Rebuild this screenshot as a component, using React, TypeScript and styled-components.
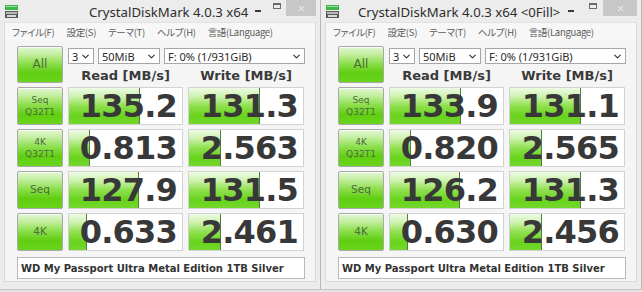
import React from 'react';
import styled, { createGlobalStyle } from 'styled-components';
import { ChevronDown, X } from 'lucide-react';

const GlobalStyle = createGlobalStyle`
  html, body {
    margin: 0;
    padding: 0;
    background: #e4e4e4;
  }
  body {
    width: 642px;
    height: 292px;
    overflow: hidden;
    font-family: "DejaVu Sans", sans-serif;
  }
`;

const Desktop = styled.div`
  display: flex;
  width: 642px;
  height: 292px;
`;

const Window = styled.div`
  width: 321px;
  height: 290px;
  box-sizing: border-box;
  background: #ececec;
  border-right: 1px solid #b8b8b8;
  border-bottom: 1px solid #c6c6c6;
  display: flex;
  flex-direction: column;
`;

const TitleBar = styled.div`
  height: 22px;
  display: flex;
  align-items: flex-start;
  padding-right: 4px;
  flex-shrink: 0;
`;

const AppIcon = styled.svg`
  margin: 5px 0 0 5px;
  flex-shrink: 0;
`;

const TitleText = styled.div<{ $offset: number }>`
  margin-left: ${p => p.$offset}px;
  margin-top: 4px;
  font: 13.2px "Noto Sans", sans-serif;
  color: #2e2e2e;
  white-space: nowrap;
  line-height: 16px;
`;

const Spacer = styled.div`
  flex: 1;
`;

const CaptionButton = styled.div<{ $w: number }>`
  width: ${p => p.$w}px;
  height: 16px;
  display: flex;
  align-items: center;
  justify-content: center;
`;

const CloseButton = styled(CaptionButton)`
  background: #c7c7c7;
`;

const MinGlyph = styled.div`
  width: 6px;
  height: 2px;
  background: #3a3a3a;
  margin-top: 6px;
`;

const MaxGlyph = styled.div`
  width: 8px;
  height: 6px;
  box-sizing: border-box;
  border: 1px solid #6a6a6a;
  border-top-width: 2px;
  margin-top: -4px;
`;

const Client = styled.div`
  flex: 1;
  margin: 0 4px 7px 4px;
  background: #f5f5f5;
  border: 1px solid #d9d9d9;
  border-top: none;
  display: flex;
  flex-direction: column;
`;

const MenuBar = styled.div`
  height: 19px;
  display: flex;
  align-items: center;
  gap: 12px;
  padding-left: 7px;
  background: #f7f7f7;
  border-top: 1px solid #e2e2e2;
  box-sizing: border-box;
`;

const MenuItem = styled.span`
  font: 9.5px "Noto Sans CJK JP", "Noto Sans", sans-serif;
  font-feature-settings: "palt" 1;
  letter-spacing: -0.3px;
  color: #5a5a5a;
  white-space: nowrap;
`;

const Body = styled.div`
  display: flex;
  flex-direction: column;
  padding: 5px 0 0 12px;
`;

const TopSection = styled.div`
  display: flex;
  gap: 5px;
  height: 37px;
`;

const GreenButton = styled.div<{ $size: number }>`
  width: 46px;
  box-sizing: border-box;
  border: 1px solid #a9a9a9;
  border-radius: 2px;
  background: linear-gradient(
    to bottom,
    #e4f7d6 0%,
    #c1ee9c 22%,
    #8ade4a 48%,
    #5fce10 74%,
    #6ad41e 100%
  );
  box-shadow: inset 0 1px 0 rgba(255, 255, 255, 0.7);
  display: flex;
  flex-direction: column;
  align-items: center;
  justify-content: center;
  font: ${p => p.$size}px "DejaVu Sans", sans-serif;
  line-height: ${p => p.$size + 3}px;
  color: #4d6b3c;
  text-align: center;
`;

const TopRight = styled.div`
  display: flex;
  flex-direction: column;
  width: 237px;
`;

const ComboRow = styled.div`
  display: flex;
  gap: 4px;
  margin-top: 2px;
`;

const Combo = styled.div<{ $w: number }>`
  width: ${p => p.$w}px;
  height: 16px;
  box-sizing: border-box;
  border: 1px solid #a6a6a6;
  background: #fff;
  display: flex;
  align-items: center;
  justify-content: space-between;
  padding: 0 2px 0 3px;
  font: 11px "Noto Sans", sans-serif;
  color: #2b2b2b;
  white-space: nowrap;
`;

const HeaderRow = styled.div`
  display: grid;
  grid-template-columns: 115px 116px;
  column-gap: 5px;
  margin-top: 4px;
`;

const Header = styled.div`
  text-align: center;
  font: bold 13px "DejaVu Sans", sans-serif;
  color: #3a3a3a;
  line-height: 16px;
`;

const ResultGrid = styled.div`
  display: grid;
  grid-template-columns: 46px 115px 116px;
  grid-auto-rows: 38px;
  column-gap: 5px;
  row-gap: 4px;
  margin-top: 4px;
`;

const Cell = styled.div`
  position: relative;
  box-sizing: border-box;
  background: #fff;
  border: 1px solid #d2d2d2;
  overflow: hidden;
  display: flex;
  align-items: center;
  justify-content: flex-end;
  padding-right: 5px;
`;

const Fill = styled.div`
  position: absolute;
  left: 0;
  top: 0;
  bottom: 0;
  box-sizing: border-box;
  background: linear-gradient(
    to bottom,
    #eefbe5 0%,
    #cdf2ae 24%,
    #8fe04f 50%,
    #68d31c 78%,
    #74d72c 100%
  );
  border-right: 1px solid #587a42;
`;

const Value = styled.span`
  position: relative;
  font: bold 32px "DejaVu Sans", sans-serif;
  letter-spacing: -0.8px;
  color: #383838;
  line-height: 1;
`;

const Comment = styled.div`
  width: 288px;
  height: 22px;
  box-sizing: border-box;
  margin-top: 6px;
  border: 1px solid #b9b9b9;
  background: #fff;
  display: flex;
  align-items: center;
  padding-left: 3px;
  font: bold 10px "DejaVu Sans", sans-serif;
  color: #333;
  white-space: nowrap;
`;

type Row = { label: string[]; read: string; write: string };

const meter = (v: string) => Math.min(1, Math.max(0, Math.log10(parseFloat(v) * 10) / 5));

const DiskIcon = () => (
  <AppIcon width="13" height="13" viewBox="0 0 13 13">
    <rect x="0" y="0" width="13" height="5" fill="#3db54a" />
    <rect x="1" y="1" width="11" height="1" fill="#9be3a0" />
    <rect x="0" y="6" width="13" height="7" fill="#5b5b5b" />
    <rect x="1" y="7" width="11" height="2" fill="#b9b9b9" />
    <rect x="2" y="10" width="9" height="2" fill="#d8d8d8" />
  </AppIcon>
);

const Combos = () => (
  <ComboRow>
    <Combo $w={26}>
      3<ChevronDown size={11} strokeWidth={2.5} color="#333" />
    </Combo>
    <Combo $w={62}>
      50MiB<ChevronDown size={11} strokeWidth={2.5} color="#333" />
    </Combo>
    <Combo $w={141}>
      F: 0% (1/931GiB)<ChevronDown size={11} strokeWidth={2.5} color="#333" />
    </Combo>
  </ComboRow>
);

const DiskMark: React.FC<{ title: string; titleOffset: number; rows: Row[] }> = ({ title, titleOffset, rows }) => (
  <Window>
    <TitleBar>
      <DiskIcon />
      <TitleText $offset={titleOffset}>{title}</TitleText>
      <Spacer />
      <CaptionButton $w={22}>
        <MinGlyph />
      </CaptionButton>
      <CaptionButton $w={21}>
        <MaxGlyph />
      </CaptionButton>
      <CloseButton $w={34}>
        <X size={9} strokeWidth={2} color="#fff" />
      </CloseButton>
    </TitleBar>
    <Client>
      <MenuBar>
        <MenuItem>ファイル(F)</MenuItem>
        <MenuItem>設定(S)</MenuItem>
        <MenuItem>テーマ(T)</MenuItem>
        <MenuItem>ヘルプ(H)</MenuItem>
        <MenuItem>言語(Language)</MenuItem>
      </MenuBar>
      <Body>
        <TopSection>
          <GreenButton $size={12}>All</GreenButton>
          <TopRight>
            <Combos />
            <HeaderRow>
              <Header>Read [MB/s]</Header>
              <Header>Write [MB/s]</Header>
            </HeaderRow>
          </TopRight>
        </TopSection>
        <ResultGrid>
          {rows.map(r => (
            <React.Fragment key={r.label.join('-')}>
              <GreenButton $size={r.label.length > 1 ? 9 : 10.5}>
                {r.label.map(l => (
                  <span key={l}>{l}</span>
                ))}
              </GreenButton>
              <Cell>
                <Fill style={{ width: `${meter(r.read) * 100}%` }} />
                <Value>{r.read}</Value>
              </Cell>
              <Cell>
                <Fill style={{ width: `${meter(r.write) * 100}%` }} />
                <Value>{r.write}</Value>
              </Cell>
            </React.Fragment>
          ))}
        </ResultGrid>
        <Comment>WD My Passport Ultra Metal Edition 1TB Silver</Comment>
      </Body>
    </Client>
  </Window>
);

const randomRows: Row[] = [
  { label: ['Seq', 'Q32T1'], read: '135.2', write: '131.3' },
  { label: ['4K', 'Q32T1'], read: '0.813', write: '2.563' },
  { label: ['Seq'], read: '127.9', write: '131.5' },
  { label: ['4K'], read: '0.633', write: '2.461' },
];

const zeroFillRows: Row[] = [
  { label: ['Seq', 'Q32T1'], read: '133.9', write: '131.1' },
  { label: ['4K', 'Q32T1'], read: '0.820', write: '2.565' },
  { label: ['Seq'], read: '126.2', write: '131.3' },
  { label: ['4K'], read: '0.630', write: '2.456' },
];

export default function App() {
  return (
    <>
      <GlobalStyle />
      <Desktop>
        <DiskMark title="CrystalDiskMark 4.0.3 x64" titleOffset={71} rows={randomRows} />
        <DiskMark title="CrystalDiskMark 4.0.3 x64 <0Fill>" titleOffset={19} rows={zeroFillRows} />
      </Desktop>
    </>
  );
}
